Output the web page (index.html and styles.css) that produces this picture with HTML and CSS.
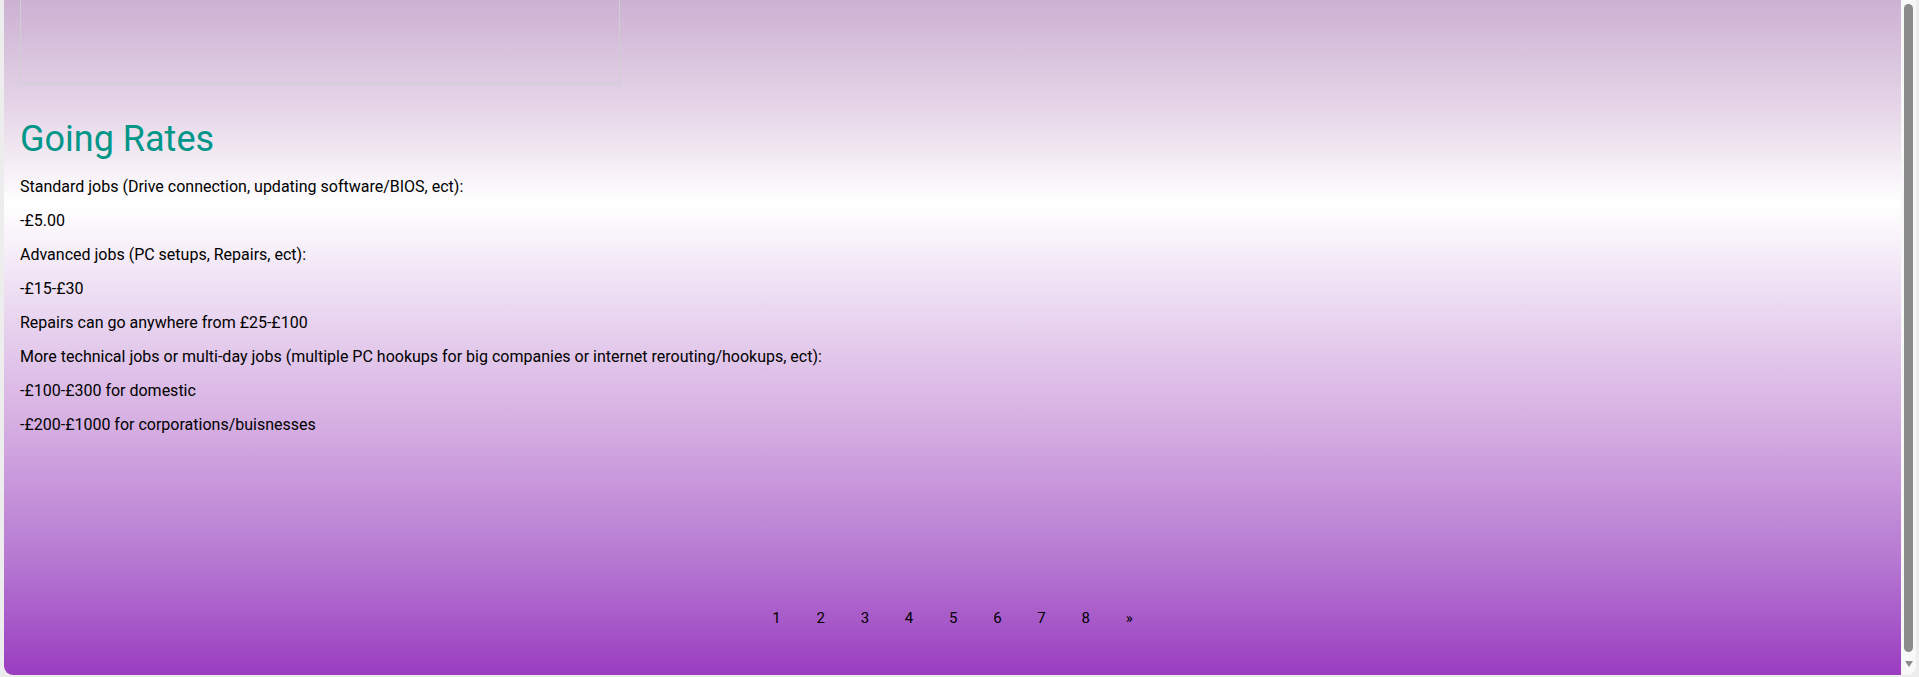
FILE: index.html
```html
<!DOCTYPE html>
<html lang="en">
<head>
<meta charset="utf-8">
<title>Going Rates</title>
<link rel="stylesheet" href="styles.css">
</head>
<body>
<div class="window">
  <div class="viewport">
    <main class="page">
      <div class="frame-box"></div>
      <h1 class="title">Going Rates</h1>
      <p>Standard jobs (Drive connection, updating software/BIOS, ect):</p>
      <p>-£5.00</p>
      <p>Advanced jobs (PC setups, Repairs, ect):</p>
      <p>-£15-£30</p>
      <p>Repairs can go anywhere from £25-£100</p>
      <p>More technical jobs or multi-day jobs (multiple PC hookups for big companies or internet rerouting/hookups, ect):</p>
      <p>-£100-£300 for domestic</p>
      <p>-£200-£1000 for corporations/buisnesses</p>
      <nav class="pager">
        <a class="pg" href="#">1</a>
        <a class="pg" href="#">2</a>
        <a class="pg" href="#">3</a>
        <a class="pg" href="#">4</a>
        <a class="pg" href="#">5</a>
        <a class="pg" href="#">6</a>
        <a class="pg" href="#">7</a>
        <a class="pg" href="#">8</a>
        <a class="pg" href="#">»</a>
      </nav>
    </main>
    <div class="scrollbar">
      <div class="thumb"></div>
      <div class="arrow-down"></div>
    </div>
  </div>
</div>
</body>
</html>
```
FILE: styles.css
```css
html, body {
  margin: 0;
  padding: 0;
}
body {
  background: #f1f1f1;
  font-family: Roboto, "Liberation Sans", sans-serif;
  font-size: 16px;
  line-height: 1.5;
  color: #000;
}
.window {
  height: 677px;
  box-sizing: border-box;
  padding: 0 3px 2px 4px;
  background: #ededed;
  display: flex;
}
.viewport {
  flex: 1;
  display: flex;
  border-radius: 0 0 9px 9px;
  overflow: hidden;
  background: #f8f8f8;
}
.page {
  flex: 1;
  display: flex;
  flex-direction: column;
  padding: 0 16px;
  background: linear-gradient(to bottom, #ccb1d3 0px, #e6d6e8 110px, #ffffff 205px, #eedff3 290px, #d6b0e2 420px, #b679d2 560px, #9a3dc0 675px);
}
.frame-box {
  width: 600px;
  height: 85px;
  box-sizing: border-box;
  border: 1px solid #cfcfcf;
  border-top: 0;
}
.title {
  margin: 33px 0 0;
  font-size: 36px;
  font-weight: 400;
  line-height: 1.2;
  color: #009688;
}
p {
  margin: 10px 0 0;
}
.title + p {
  margin-top: 14px;
}
.pager {
  margin-top: auto;
  margin-bottom: 38px;
  text-align: center;
  font-size: 15px;
}
.pg {
  display: inline-block;
  padding: 8px 16px;
  color: #000;
  text-decoration: none;
}
.scrollbar {
  width: 15px;
  display: flex;
  flex-direction: column;
  align-items: center;
  padding: 4px 0 8px;
  box-sizing: border-box;
  background: #f8f8f8;
}
.thumb {
  width: 9px;
  height: 648px;
  background: #8b8b8b;
  border-radius: 5px;
}
.arrow-down {
  margin-top: 9px;
  width: 0;
  height: 0;
  border-left: 4px solid transparent;
  border-right: 4px solid transparent;
  border-top: 6px solid #8b8b8b;
}
```
